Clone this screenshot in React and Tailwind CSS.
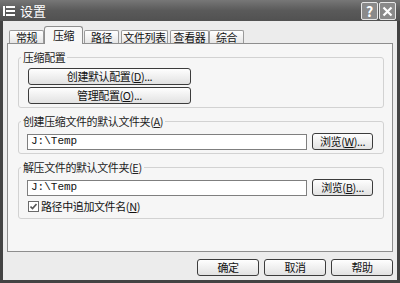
const cjk = "font-['Noto_Sans_CJK_SC','Noto_Sans',sans-serif]";
const txt = "text-[11px] tracking-[-0.4px] leading-none text-[#111]";

function Btn({ children, className = "" }) {
  return (
    <div className={`flex items-center justify-center rounded-[3px] border border-[#3c3c3c] bg-gradient-to-b from-[#fefefe] to-[#e2e2e2] whitespace-nowrap ${txt} ${className}`}>
      {children}
    </div>
  );
}

function Key({ k }) {
  return (
    <span>
      (<span className="underline">{k}</span>)
    </span>
  );
}

function Group({ title, children, className = "" }) {
  return (
    <fieldset className={`rounded-[3px] border border-[#d2d2d2] ${className}`}>
      <legend className="ml-[2px] px-[2px] text-[11px] tracking-[-0.4px] leading-[14px] text-[#222]">{title}</legend>
      {children}
    </fieldset>
  );
}

function PathRow({ k }) {
  return (
    <div className="flex h-[17px] items-center gap-[5px] pl-[8px]">
      <div className="flex h-[16px] w-[280px] items-center border border-[#7f7f7f] bg-white px-[3px] font-['Liberation_Mono',monospace] text-[11px] text-[#111]">
        {"J:\\Temp"}
      </div>
      <Btn className="h-[17px] w-[61px]">
        浏览<Key k={k} />...
      </Btn>
    </div>
  );
}

const tabs = [
  { t: "常规", w: "w-[35px]" },
  { t: "压缩", w: "w-[39px]", on: true },
  { t: "路径", w: "w-[35px] ml-[1px]" },
  { t: "文件列表", w: "w-[47px] ml-[2px]" },
  { t: "查看器", w: "w-[39px] ml-[2px]" },
  { t: "综合", w: "w-[35px]" },
];

export default function App() {
  return (
    <div className={`flex h-[283px] w-[400px] flex-col bg-[#434343] ${cjk}`}>
      <div className="flex h-[21px] items-center bg-gradient-to-b from-[#777] via-[#5a5a5a] to-[#515151] pl-[3px] pr-[4px]">
        <svg width="12" height="12" viewBox="0 0 12 12" className="mt-[1px]">
          <rect x="0" y="1" width="2" height="10" fill="#fff" />
          <rect x="3" y="1" width="9" height="2" fill="#fff" />
          <rect x="3" y="5" width="9" height="2" fill="#fff" />
          <rect x="3" y="9" width="9" height="2" fill="#fff" />
        </svg>
        <span className="ml-[5px] text-[13px] leading-none text-white">设置</span>
        <div className="ml-auto flex gap-[1px] pt-[1px]">
          <div className="flex h-[18px] w-[17px] items-center justify-center rounded-[2px] border border-[#e6e6e6] bg-[#8a8a8a] text-[14px] font-bold leading-none text-white">
            ?
          </div>
          <div className="flex h-[18px] w-[17px] items-center justify-center rounded-[2px] border border-[#e6e6e6] bg-[#8a8a8a]">
            <svg width="11" height="11" viewBox="0 0 11 11">
              <path d="M1.5 1.5 L9.5 9.5 M9.5 1.5 L1.5 9.5" stroke="#fff" strokeWidth="2.2" />
            </svg>
          </div>
        </div>
      </div>

      <div className="mx-[3px] mb-[3px] flex flex-1 flex-col bg-[#ececec] px-[4px] pt-[6px]">
        <div className="flex h-[16px] items-end pl-[2px]">
          {tabs.map((tab) =>
            tab.on ? (
              <div
                key={tab.t}
                className={`relative z-10 -mb-px flex h-[18px] items-center justify-center rounded-t-[3px] border border-b-0 border-[#8e8e8e] bg-[#f7f7f7] whitespace-nowrap ${txt} ${tab.w}`}
              >
                {tab.t}
              </div>
            ) : (
              <div
                key={tab.t}
                className={`flex h-[13px] items-center justify-center rounded-t-[2px] border border-b-0 border-[#9a9a9a] bg-gradient-to-b from-white to-[#e6e6e6] whitespace-nowrap ${txt} ${tab.w}`}
              >
                {tab.t}
              </div>
            )
          )}
        </div>

        <div className="flex h-[209px] flex-col border border-[#8e8e8e] bg-[#f6f6f6] pl-[10px] pr-[8px] pt-[6px]">
          <Group title="压缩配置" className="pb-[3px]">
            <div className="flex flex-col gap-[2px] pl-[9px] pt-[4px]">
              <Btn className="h-[17px] w-[163px]">
                创建默认配置<Key k="D" />...
              </Btn>
              <Btn className="h-[17px] w-[163px]">
                管理配置<Key k="O" />...
              </Btn>
            </div>
          </Group>

          <Group title={<>创建压缩文件的默认文件夹<Key k="A" /></>} className="mt-[6px] pb-[3px]">
            <div className="pt-[5px]">
              <PathRow k="W" />
            </div>
          </Group>

          <Group title={<>解压文件的默认文件夹<Key k="E" /></>} className="mt-[6px] pb-[6px]">
            <div className="pt-[5px]">
              <PathRow k="B" />
            </div>
            <div className={`mt-[4px] flex h-[12px] items-center gap-[2px] pl-[9px] ${txt}`}>
              <div className="flex h-[11px] w-[11px] items-center justify-center border border-[#6a6a6a] bg-white">
                <svg width="7" height="7" viewBox="0 0 7 7">
                  <path d="M0.5 3.5 L2.5 5.5 L6.5 1" stroke="#555" strokeWidth="1.6" fill="none" />
                </svg>
              </div>
              <span>
                路径中追加文件名<Key k="N" />
              </span>
            </div>
          </Group>
        </div>

        <div className="mt-[7px] flex justify-end gap-[5px]">
          <Btn className="h-[17px] w-[62px]">确定</Btn>
          <Btn className="h-[17px] w-[62px]">取消</Btn>
          <Btn className="h-[17px] w-[62px]">帮助</Btn>
        </div>
      </div>
    </div>
  );
}
